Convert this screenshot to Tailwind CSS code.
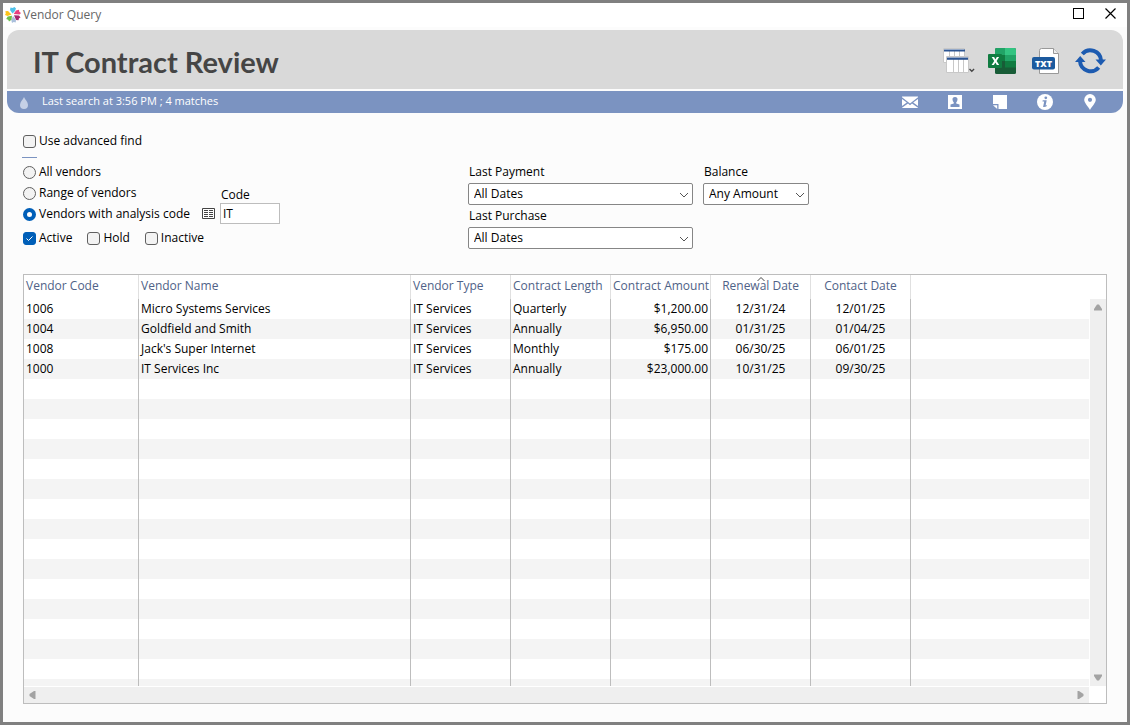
<!DOCTYPE html>
<html lang="en">
<head>
    <meta charset="UTF-8">
    <meta name="viewport" content="width=device-width, initial-scale=1.0">
    <title>Vendor Query</title>
    <script src="https://cdn.jsdelivr.net/npm/@tailwindcss/browser@4"></script>
</head>
<body class="h-screen flex flex-col border-[3px] border-[#808080] bg-[#fcfcfc] font-['Open_Sans','Noto_Sans',sans-serif] text-[12px] leading-4 text-black overflow-hidden">
    <!-- Title bar -->
    <div class="flex items-center justify-between h-6 bg-white pl-0.5 pr-[11px] shrink-0">
        <div class="flex items-center gap-0.5 text-[#666]">
            <svg class="w-4 h-4" viewBox="0 0 16 16">
                <path fill="#4fc1e9" d="M7.500 6.500 5 3 5.500.5 7.500 1 9.500 0 11 1.500 10 4z"/>
                <path fill="#e8407f" d="m8.700 7 2.300-3.500 3-.8.3 2 1.700 1.300-1.500 1.500z"/>
                <path fill="#a5256e" d="m9 8.200 5 .3 1.500 2-1.500.8-.5 2-2.500-.3z"/>
                <path fill="#a9bfdc" d="m8 9 3 4-.3 2.500-2-.5-1.700 1-.7-3z"/>
                <path fill="#6cbf4b" d="m7 8.800-.5 4-2.500 1.700-.8-1.800-2-.7 1.500-2.500z"/>
                <path fill="#fcc419" d="M6.500 7.500 2.500 9 0 8l.8-1.800L.3 4.200 3 4z"/>
            </svg>
            <span>Vendor Query</span>
        </div>
        <div class="flex items-center gap-[21px]">
            <button type="button" aria-label="Maximize" class="block w-[11px] h-[11px] -mt-1 border border-black"></button>
            <button type="button" aria-label="Close" class="block -mt-1">
                <svg class="w-[11px] h-[11px]" viewBox="0 0 11 11" fill="none" stroke="#000" stroke-width="1.200"><path d="m.5.5 10 10M10.500.5l-10 10"/></svg>
            </button>
        </div>
    </div>

    <!-- Header -->
    <header class="mx-1 mt-[3px] shrink-0">
        <div class="flex items-center justify-between h-[59px] rounded-t-xl bg-[#d9d9d9] pl-[26px] pr-[17px]">
            <h1 class="font-['Lato',sans-serif] font-bold text-[29px] leading-9 text-[#454545] pt-1">IT Contract Review</h1>
            <div class="flex items-center gap-[13px] pt-0.5">
                <button type="button" aria-label="Lists" class="block">
                    <svg class="w-8 h-7" viewBox="0 0 32 28">
                        <path fill="#fff" stroke="#c8c8c8" d="M.5 1.500h21v14H.5z"/>
                        <path stroke="#c8c8c8" d="M6.500 4v12M11.500 4v6M16.500 4v6"/>
                        <path fill="#2c5592" d="M1 2.500h21v2H1z"/>
                        <path fill="#fff" stroke="#c8c8c8" d="M3.500 9.500h22v16h-22z"/>
                        <path stroke="#c8c8c8" d="M10.500 12v13M15.500 12v13M20.500 12v13"/>
                        <path fill="#2c5592" d="M4 10.500h21v2.300H4z"/>
                        <path fill="none" stroke="#444" stroke-width="1.300" d="m26.500 22 2.300 2.300L31.100 22"/>
                    </svg>
                </button>
                <button type="button" aria-label="Export to Excel" class="block">
                    <svg class="w-7 h-7" viewBox="0 0 28 28">
                        <rect x="7" y="1" width="21" height="26" rx="1.500" fill="#185c37"/>
                        <path fill="#21a366" d="M8.500 1H17v7H7V2.500Q7 1 8.500 1z"/>
                        <path fill="#33c481" d="M17 1h9.500Q28 1 28 2.500V8H17z"/>
                        <path fill="#107c41" d="M7 8h10v6H7z"/>
                        <path fill="#21a366" d="M17 8h11v6H17z"/>
                        <path fill="#107c41" d="M17 14h11v6.500H17z"/>
                        <rect x="0" y="7" width="14" height="14" rx="1" fill="#107c41"/>
                        <path fill="#fff" d="M3.700 10h2.400l1.300 2.600L8.800 10h2.300l-2.500 4 2.600 4H8.800l-1.400-2.600L5.900 18H3.600l2.600-4z"/>
                    </svg>
                </button>
                <button type="button" aria-label="Export to text" class="block ml-[3px]">
                    <svg class="w-7 h-7" viewBox="0 0 28 28">
                        <path fill="#fff" stroke="#999" d="M9.500 1.500h12l5 5v20h-19v-23q0-2 2-2z"/>
                        <path fill="#eee" stroke="#999" d="M21.500 1.500v5h5"/>
                        <rect x="0" y="10" width="23" height="12.500" rx="2" fill="#1c5a9e"/>
                        <text x="11.500" y="19.500" text-anchor="middle" font-family="Open Sans" font-weight="800" font-size="9" fill="#fff">TXT</text>
                    </svg>
                </button>
                <button type="button" aria-label="Refresh" class="block ml-0.5">
                    <svg class="w-[31px] h-7" viewBox="0 0 31 28">
                        <g fill="none" stroke="#1d5bb0" stroke-width="4">
                            <path d="M7.300 7A10.700 10.700 0 0 1 26 13.500"/>
                            <path d="M23.700 20.500A10.700 10.700 0 0 1 5 14"/>
                        </g>
                        <path fill="#1d5bb0" d="M20.500 12.500h10.500L25.800 18.500zM0 15h10.500L5.200 9z"/>
                    </svg>
                </button>
            </div>
        </div>
        <div class="flex items-center justify-between h-[22px] mt-0.5 rounded-b-xl bg-[#7b93c1] text-white pl-3 pr-[25px]">
            <div class="flex items-center gap-[13px]">
                <svg class="w-[10px] h-3 mt-0.5" viewBox="0 0 10 12"><path fill="#c5d0e6" d="M5 0c1 2.500 4 5 4 8a4 4 0 0 1-8 0c0-3 3-5.500 4-8z"/></svg>
                <span class="text-[11px] pb-0.5">Last search at 3:56 PM ; 4 matches</span>
            </div>
            <div class="flex items-center gap-[29px]">
                <button type="button" aria-label="Email" class="block">
                    <svg class="w-4 h-4" viewBox="0 0 16 16"><path fill="#fff" d="M0 2.500h16v.8L8 9.500 0 3.300zM0 5l4.800 3.600L0 12zM16 5l-4.800 3.600L16 12zM0 13.800l6-4.200 2 1.600 2-1.600 6 4.200v.2H0z"/></svg>
                </button>
                <button type="button" aria-label="Contact" class="block">
                    <svg class="w-4 h-4" viewBox="0 0 16 16"><path fill="#fff" d="M1 1h14v14H1z"/><path fill="#7b93c1" d="M8 3a2.500 2.500 0 0 1 2.500 2.700Q10.300 7.500 9.200 8.500v1l3.300 1V13h-9v-2.500l3.300-1v-1Q5.700 7.500 5.500 5.700A2.500 2.500 0 0 1 8 3z"/></svg>
                </button>
                <button type="button" aria-label="Notes" class="block">
                    <svg class="w-4 h-4" viewBox="0 0 16 16"><path fill="#fff" d="M1 1h14v14H6.500v-5H1zM1 11.200h4.200V15z"/></svg>
                </button>
                <button type="button" aria-label="Information" class="block">
                    <svg class="w-4 h-4" viewBox="0 0 16 16"><circle cx="8" cy="8" r="8" fill="#fff"/><circle cx="8.800" cy="3.800" r="1.400" fill="#7b93c1"/><path fill="#7b93c1" d="M5.700 6.300h4L8.600 11.500l1.300-.4-.3 1.200q-1.500 1-3.500.7L7.200 7.400H5.500z"/></svg>
                </button>
                <button type="button" aria-label="Location" class="block">
                    <svg class="w-4 h-4" viewBox="0 0 16 16"><path fill="#fff" fill-rule="evenodd" d="M8 0a5.800 5.800 0 0 1 5.800 5.800C13.800 9 9.500 13 8 16 6.500 13 2.200 9 2.200 5.800A5.800 5.800 0 0 1 8 0zm0 3.700a2.100 2.100 0 1 0 0 4.200 2.100 2.100 0 0 0 0-4.200z"/></svg>
                </button>
            </div>
        </div>
    </header>

    <!-- Search options -->
    <form class="flex px-5 pt-[19px] shrink-0">
        <div class="w-[445px] pt-px">
            <label class="flex items-center gap-[3px]">
                <input type="checkbox" class="appearance-none w-[13px] h-[13px] rounded-[3px] border border-[#606060] bg-[#f3f3f3]">
                Use advanced find
            </label>
            <div class="w-[15px] h-px -ml-px mt-2 mb-1.5 bg-[#7b93c1]"></div>
            <div class="flex">
                <div class="w-[179px] flex flex-col gap-[5px]">
                    <label class="flex items-center gap-[3px]">
                        <input type="radio" name="scope" class="appearance-none w-[13px] h-[13px] rounded-full border border-[#606060] bg-[#f3f3f3] checked:border-4 checked:border-[#005fb8] checked:bg-white">
                        All vendors
                    </label>
                    <label class="flex items-center gap-[3px]">
                        <input type="radio" name="scope" class="appearance-none w-[13px] h-[13px] rounded-full border border-[#606060] bg-[#f3f3f3] checked:border-4 checked:border-[#005fb8] checked:bg-white">
                        Range of vendors
                    </label>
                    <label class="flex items-center gap-[3px]">
                        <input type="radio" name="scope" checked class="appearance-none w-[13px] h-[13px] rounded-full border border-[#606060] bg-[#f3f3f3] checked:border-4 checked:border-[#005fb8] checked:bg-white">
                        Vendors with analysis code
                    </label>
                </div>
                <div class="flex items-end gap-[5px]">
                    <button type="button" aria-label="Choose code" class="block mb-[3px]">
                        <svg class="w-[13px] h-[11px]" viewBox="0 0 13 11"><path fill="#fff" stroke="#444" d="M.5.5h12v10H.5z"/><path stroke="#444" d="M2 2.500h4M7 2.500h4M2 4.500h4M7 4.500h4M2 6.500h4M7 6.500h4M2 8.500h4M7 8.500h4"/></svg>
                    </button>
                    <div class="-mb-0.5">
                        <label for="code" class="block pl-px">Code</label>
                        <input id="code" type="text" value="IT" class="block w-[60px] h-[21px] px-0.5 border border-[#bdbdbd] bg-white">
                    </div>
                </div>
            </div>
            <div class="flex gap-[15px] mt-2">
                <label class="flex items-center gap-[3px]">
                    <span class="relative block w-[13px] h-[13px]">
                        <input type="checkbox" checked class="block appearance-none w-[13px] h-[13px] rounded-[3px] border border-[#606060] bg-[#f3f3f3] checked:border-[#005fb8] checked:bg-[#005fb8]">
                        <svg class="absolute inset-0 pointer-events-none" viewBox="0 0 13 13" fill="none" stroke="#fff"><path d="m3.500 6.500 2 2 4-4"/></svg>
                    </span>
                    Active
                </label>
                <label class="flex items-center gap-[3px]">
                    <input type="checkbox" class="appearance-none w-[13px] h-[13px] rounded-[3px] border border-[#606060] bg-[#f3f3f3]">
                    Hold
                </label>
                <label class="flex items-center gap-[3px]">
                    <input type="checkbox" class="appearance-none w-[13px] h-[13px] rounded-[3px] border border-[#606060] bg-[#f3f3f3]">
                    Inactive
                </label>
            </div>
        </div>

        <div class="w-[225px] pt-8">
            <label for="last-payment" class="block pl-px mb-[3px]">Last Payment</label>
            <div class="relative">
                <select id="last-payment" class="block appearance-none w-full h-[22px] pl-[5px] border border-[#868686] rounded-xs bg-white">
                    <option>All Dates</option>
                </select>
                <svg class="absolute right-[5px] top-2 w-2 h-2 pointer-events-none" viewBox="0 0 8 8" fill="none" stroke="#555"><path d="m0 2 4 4 4-4"/></svg>
            </div>
            <label for="last-purchase" class="block pl-px my-[3px]">Last Purchase</label>
            <div class="relative">
                <select id="last-purchase" class="block appearance-none w-full h-[22px] pl-[5px] border border-[#868686] rounded-xs bg-white">
                    <option>All Dates</option>
                </select>
                <svg class="absolute right-[5px] top-2 w-2 h-2 pointer-events-none" viewBox="0 0 8 8" fill="none" stroke="#555"><path d="m0 2 4 4 4-4"/></svg>
            </div>
        </div>

        <div class="w-[106px] ml-[10px] pt-8">
            <label for="balance" class="block pl-px mb-[3px]">Balance</label>
            <div class="relative">
                <select id="balance" class="block appearance-none w-full h-[22px] pl-[5px] border border-[#868686] rounded-xs bg-white">
                    <option>Any Amount</option>
                </select>
                <svg class="absolute right-[5px] top-2 w-2 h-2 pointer-events-none" viewBox="0 0 8 8" fill="none" stroke="#555"><path d="m0 2 4 4 4-4"/></svg>
            </div>
        </div>
    </form>

    <!-- Results -->
    <section class="flex-1 min-h-0 flex flex-col mx-5 mt-[25px] mb-[18px] border border-[#bdbdbd] bg-white">
        <div class="flex flex-1 min-h-0">
            <div class="flex-1 overflow-hidden">
                <table class="w-full table-fixed border-separate border-spacing-0 [&_td]:h-5 [&_td]:p-0 [&_td]:px-0.5 [&_td]:border-r [&_td]:border-[#bdbdbd] [&_td:last-child]:border-r-0 [&_tbody_tr:nth-child(even)]:bg-[#f4f4f4]">
                    <thead>
                        <tr class="h-6 text-left text-[#4f6287] [&_th]:font-normal [&_th]:p-0 [&_th]:px-0.5 [&_th]:pb-0.5 [&_th]:border-r [&_th]:border-[#e0e0e0] [&_th:last-child]:border-r-0">
                            <th class="w-[115px]">Vendor Code</th>
                            <th class="w-[272px]">Vendor Name</th>
                            <th class="w-[100px]">Vendor Type</th>
                            <th class="w-[100px] whitespace-nowrap">Contract Length</th>
                            <th class="w-[100px] whitespace-nowrap text-right">Contract Amount</th>
                            <th class="relative w-[100px] text-center">
                                <svg class="absolute top-0.5 left-[46px] w-2 h-1" viewBox="0 0 8 4" fill="none" stroke="#444"><path d="m.5 4 3.500-3.500L7.500 4"/></svg>
                                Renewal Date
                            </th>
                            <th class="w-[100px] text-center">Contact Date</th>
                            <th></th>
                        </tr>
                    </thead>
                    <tbody id="vendors">
                        <tr><td>1006</td><td>Micro Systems Services</td><td>IT Services</td><td>Quarterly</td><td class="text-right">$1,200.00</td><td class="text-center">12/31/24</td><td class="text-center">12/01/25</td><td></td></tr>
                        <tr><td>1004</td><td>Goldfield and Smith</td><td>IT Services</td><td>Annually</td><td class="text-right">$6,950.00</td><td class="text-center">01/31/25</td><td class="text-center">01/04/25</td><td></td></tr>
                        <tr><td>1008</td><td>Jack's Super Internet</td><td>IT Services</td><td>Monthly</td><td class="text-right">$175.00</td><td class="text-center">06/30/25</td><td class="text-center">06/01/25</td><td></td></tr>
                        <tr><td>1000</td><td>IT Services Inc</td><td>IT Services</td><td>Annually</td><td class="text-right">$23,000.00</td><td class="text-center">10/31/25</td><td class="text-center">09/30/25</td><td></td></tr>
                    </tbody>
                </table>
            </div>
            <div class="w-4 ml-px mt-6 flex flex-col items-center justify-between py-[5px] bg-[#efefef]">
                <svg class="w-2 h-[7px]" viewBox="0 0 8 7"><path fill="#a3a3a3" d="M3 .5h2L8 5v1.500H0V5z"/></svg>
                <svg class="w-2 h-[7px]" viewBox="0 0 8 7"><path fill="#a3a3a3" d="M3 6.500h2L8 2V.5H0V2z"/></svg>
            </div>
        </div>
        <div class="h-4 mt-px mr-[17px] flex items-center justify-between px-[5px] bg-[#efefef]">
            <svg class="w-[7px] h-2" viewBox="0 0 7 8"><path fill="#a3a3a3" d="M.5 3v2L5 8h1.500V0H5z"/></svg>
            <svg class="w-[7px] h-2" viewBox="0 0 7 8"><path fill="#a3a3a3" d="M6.500 3v2L2 8H.5V0H2z"/></svg>
        </div>
    </section>

    <script>
    // empty rows so the stripes fill the rest of the list
    const vendors = document.getElementById('vendors');
    for (let i = 0; i < 60; i++) {
        const row = vendors.insertRow();
        for (let c = 0; c < 8; c++) row.insertCell();
    }
    </script>
</body>
</html>
